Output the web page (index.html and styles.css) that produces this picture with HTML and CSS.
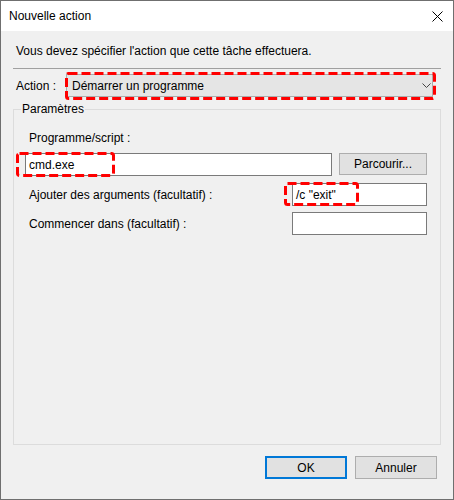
FILE: index.html
```html
<!DOCTYPE html>
<html lang="fr">
<head>
<meta charset="utf-8">
<title>Nouvelle action</title>
<link rel="stylesheet" href="styles.css">
</head>
<body>
<div class="window">
  <div class="titlebar">
    <span class="title">Nouvelle action</span>
    <svg class="close" width="11" height="11" viewBox="0 0 11 11"><path d="M0.5 0.5 L10.5 10.5 M10.5 0.5 L0.5 10.5" stroke="#000" stroke-width="1" fill="none"/></svg>
  </div>
  <div class="content">
    <p class="intro">Vous devez spécifier l'action que cette tâche effectuera.</p>
    <div class="sep"></div>
    <div class="action-row">
      <span class="action-label">Action :</span>
      <div class="combo">
        <span class="combo-text">Démarrer un programme</span>
        <svg class="chevron" width="9" height="5" viewBox="0 0 9 5"><path d="M0.5 0.5 L4.5 4.5 L8.5 0.5" stroke="#444" stroke-width="1" fill="none"/></svg>
        <svg class="annot annot-combo" width="371" height="28"><rect x="1.5" y="1.5" width="368" height="25" rx="2" fill="none" stroke="#ff0000" stroke-width="3" stroke-dasharray="9 4"/></svg>
      </div>
    </div>
    <fieldset class="group">
      <legend class="group-title">Paramètres</legend>
      <div class="prog-label">Programme/script :</div>
      <div class="prog-row">
        <div class="input prog">cmd.exe
          <svg class="annot annot-cmd" width="99" height="25"><rect x="1.5" y="1.5" width="96" height="22" rx="2" fill="none" stroke="#ff0000" stroke-width="3" stroke-dasharray="9 4"/></svg>
        </div>
        <button class="browse">Parcourir...</button>
      </div>
      <div class="arg-row">
        <span class="arg-label">Ajouter des arguments (facultatif) :</span>
        <div class="input small">/c "exit"
          <svg class="annot annot-args" width="75" height="24"><rect x="1.5" y="1.5" width="72" height="21" rx="2" fill="none" stroke="#ff0000" stroke-width="3" stroke-dasharray="9 4"/></svg>
        </div>
      </div>
      <div class="arg-row second">
        <span class="arg-label">Commencer dans (facultatif) :</span>
        <div class="input small"></div>
      </div>
    </fieldset>
    <div class="buttons">
      <button class="btn default">OK</button>
      <button class="btn">Annuler</button>
    </div>
  </div>
</div>
</body>
</html>
```

FILE: styles.css
```css
* { box-sizing: border-box; }
body {
  margin: 0;
  background: #fff;
  font-family: "Liberation Sans", Arial, sans-serif;
  font-size: 12px;
  color: #000;
}
.window {
  width: 454px;
  height: 500px;
  border: 1px solid #6f6f6f;
  background: #f0f0f0;
  display: flex;
  flex-direction: column;
}
.titlebar {
  height: 30px;
  flex: none;
  background: #fff;
  display: flex;
  align-items: center;
  justify-content: space-between;
  padding: 0 10px 0 8px;
}
.title { line-height: 16px; }
.close { display: block; }
.content {
  flex: 1;
  display: flex;
  flex-direction: column;
  padding: 0 12px 20px;
  min-height: 0;
}
.intro {
  margin: 12px 0 0 3px;
  line-height: 16px;
}
.sep {
  height: 1px;
  background: #a0a0a0;
  margin-top: 9px;
}
.action-row {
  display: flex;
  align-items: center;
  margin-top: 5px;
  padding-left: 3px;
}
.action-label { width: 50px; line-height: 16px; }
.combo {
  position: relative;
  width: 367px;
  height: 23px;
  border: 1px solid #acacac;
  background: #e5e5e5;
  display: flex;
  align-items: center;
  padding: 0 1px 0 5px;
}
.combo-text { flex: 1; line-height: 16px; }
.chevron { display: block; }
.annot {
  position: absolute;
  overflow: visible;
  pointer-events: none;
}
.annot-combo { left: -2px; top: -3px; }
.annot-cmd { left: -10px; top: -2px; }
.annot-args { left: -9px; top: -2px; }
.group {
  flex: 1;
  margin: 4px 0 0;
  border: 1px solid #dcdcdc;
  padding: 13px 13px 0 11px;
  min-width: 0;
}
.group-title {
  margin-left: -4px;
  padding: 0 1px;
  line-height: 16px;
}
.prog-label { margin-left: 4px; line-height: 16px; }
.prog-row {
  display: flex;
  align-items: flex-start;
  gap: 7px;
  margin-top: 7px;
}
.input {
  position: relative;
  height: 23px;
  border: 1px solid #7a7a7a;
  background: #fff;
  padding: 0 3px;
  display: flex;
  align-items: center;
  line-height: 16px;
}
.input.prog { flex: 1; }
.browse {
  width: 88px;
  height: 22px;
  border: 1px solid #adadad;
  background: #e1e1e1;
  font: inherit;
  color: #000;
  padding: 0;
}
.arg-row {
  display: flex;
  align-items: center;
  margin-top: 7px;
}
.arg-row.second { margin-top: 6px; }
.arg-label { margin-left: 4px; line-height: 16px; }
.input.small { width: 135px; margin-left: auto; }
.buttons {
  display: flex;
  justify-content: flex-end;
  gap: 8px;
  margin-top: 11px;
  padding-right: 4px;
}
.btn {
  width: 82px;
  height: 23px;
  border: 1px solid #adadad;
  background: #e1e1e1;
  font: inherit;
  color: #000;
  padding: 0;
}
.btn.default { border: 2px solid #0078d7; }
```
